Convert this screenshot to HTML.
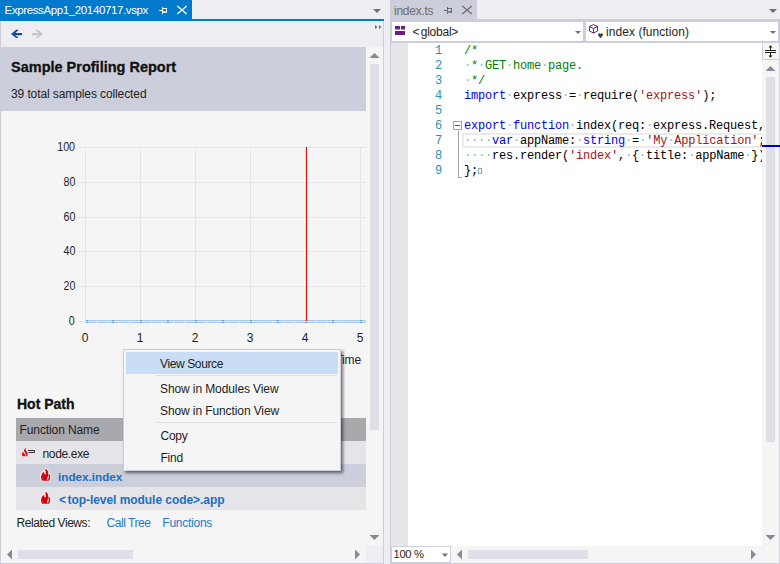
<!DOCTYPE html>
<html><head><meta charset="utf-8">
<style>
*{margin:0;padding:0;box-sizing:border-box}
html,body{width:780px;height:564px;overflow:hidden;background:#eeeef2;font-family:"Liberation Sans",sans-serif;position:relative}
.a{position:absolute}
.t{position:absolute;white-space:pre;line-height:1}
.code{font-family:"Liberation Mono",monospace;font-size:12px;letter-spacing:-0.2px;white-space:pre;position:absolute;line-height:15px;left:464px;color:#000}
.ln{font-family:"Liberation Mono",monospace;font-size:12px;letter-spacing:-0.2px;position:absolute;line-height:15px;left:420px;width:22px;text-align:right;color:#2b91af}
.cm{color:#008000}.kw{color:#0000ff}.st{color:#a31515}.d{color:#7dbdd2}
.gh{position:absolute;left:77px;width:289px;height:1px;background:#e4e5e8}
.gv{position:absolute;top:147px;width:1px;height:175px;background:#e4e5e8}
.yl{position:absolute;right:705px;transform:scaleX(0.89);transform-origin:100% 50%;font-size:12px;line-height:1;color:#1e1e1e;white-space:pre}
.xl{position:absolute;width:20px;text-align:center;font-size:12px;line-height:1;color:#1e1e1e;top:332px}
</style></head><body>
<!-- ================= LEFT PANEL ================= -->
<div class="a" style="left:0;top:0;width:192px;height:19px;background:#007acc"></div>
<div class="t" style="left:4.6px;top:5.1px;font-size:11.5px;letter-spacing:-0.38px;color:#fff">ExpressApp1_20140717.vspx</div>
<svg class="a" style="left:158px;top:6px" width="10" height="9" viewBox="158 6 10 9"><path d="M159 10H162V11H159ZM162 7H163V14H162ZM163 8H167V9H163ZM166 9H167V13H166ZM163 11.3H166V12.7H163Z" fill="#fff"/></svg>
<svg class="a" style="left:176px;top:5px" width="12" height="10" viewBox="176 5 12 10"><path d="M177.3 6L186.7 14M186.7 6L177.3 14" stroke="#fff" stroke-width="1.25" fill="none"/></svg>
<svg class="a" style="left:372px;top:8px" width="10" height="6" viewBox="372 8 10 6"><path d="M373 9H381L377 13Z" fill="#717171"/></svg>
<div class="a" style="left:0;top:19px;width:384px;height:2px;background:#007acc"></div>
<div class="a" style="left:0;top:21px;width:1px;height:543px;background:#cccedb"></div>
<div class="a" style="left:383px;top:21px;width:1px;height:543px;background:#cccedb"></div>
<div class="a" style="left:0;top:563px;width:384px;height:1px;background:#cccedb"></div>
<!-- toolbar -->
<svg class="a" style="left:10px;top:29px" width="14" height="10" viewBox="10 29 14 10"><path d="M11 34L16.2 29.8H18.8L15.3 33H22V35.2H15.3L18.8 38H16.2Z" fill="#0e4e9e"/></svg>
<svg class="a" style="left:31px;top:29px" width="14" height="10" viewBox="31 29 14 10"><path d="M43 34L37.8 29.8H35.2L38.7 33H32V35.2H38.7L35.2 38H37.8Z" fill="#c6c6c9"/></svg>
<svg class="a" style="left:374px;top:24px" width="8" height="6" viewBox="374 24 8 6"><path d="M375 25V29L377.5 27ZM379 25V29L381.5 27Z" fill="#717171"/></svg>
<!-- header -->
<div class="a" style="left:1px;top:47px;width:365px;height:64px;background:#cccedb"></div>
<div class="t" style="left:11px;top:59.7px;font-size:14.5px;font-weight:bold;color:#111;-webkit-text-stroke:0.3px #111">Sample Profiling Report</div>
<div class="t" style="left:11px;top:87.5px;font-size:12px;letter-spacing:-0.1px;color:#1e1e1e">39 total samples collected</div>
<!-- report body -->
<div class="a" style="left:1px;top:111px;width:365px;height:435px;background:#f5f5f5"></div>
<!-- chart -->
<div class="gh" style="top:147px"></div>
<div class="gh" style="top:182px"></div>
<div class="gh" style="top:217px"></div>
<div class="gh" style="top:251px"></div>
<div class="gh" style="top:286px"></div>
<div class="gh" style="top:321px"></div>
<div class="gv" style="left:85px"></div>
<div class="gv" style="left:140px"></div>
<div class="gv" style="left:195px"></div>
<div class="gv" style="left:250px"></div>
<div class="gv" style="left:305px"></div>
<div class="gv" style="left:360px"></div>
<div class="yl" style="top:140.8px">100</div>
<div class="yl" style="top:175.8px">80</div>
<div class="yl" style="top:210.8px">60</div>
<div class="yl" style="top:244.8px">40</div>
<div class="yl" style="top:279.8px">20</div>
<div class="yl" style="top:314.8px">0</div>
<div class="xl" style="left:75px">0</div>
<div class="xl" style="left:130px">1</div>
<div class="xl" style="left:185px">2</div>
<div class="xl" style="left:240px">3</div>
<div class="xl" style="left:295px">4</div>
<div class="xl" style="left:350px">5</div>
<div class="t" style="left:335px;top:354px;font-size:12px;color:#1e1e1e">Time</div>
<div class="a" style="left:86px;top:320px;width:280px;height:1px;background:#a9c9f0"></div>
<div class="a" style="left:86px;top:322px;width:280px;height:1px;background:repeating-linear-gradient(to right,#a9c9f0 0 10px,transparent 10px 11px)"></div>
<div class="a" style="left:86.0px;top:320px;width:2px;height:3px;background:linear-gradient(#5b98e6 0 1px,transparent 1px 2px,#5b98e6 2px)"></div><div class="a" style="left:112.0px;top:320px;width:2px;height:3px;background:linear-gradient(#5b98e6 0 1px,transparent 1px 2px,#5b98e6 2px)"></div><div class="a" style="left:139.5px;top:320px;width:2px;height:3px;background:linear-gradient(#5b98e6 0 1px,transparent 1px 2px,#5b98e6 2px)"></div><div class="a" style="left:167.0px;top:320px;width:2px;height:3px;background:linear-gradient(#5b98e6 0 1px,transparent 1px 2px,#5b98e6 2px)"></div><div class="a" style="left:194.5px;top:320px;width:2px;height:3px;background:linear-gradient(#5b98e6 0 1px,transparent 1px 2px,#5b98e6 2px)"></div><div class="a" style="left:222.0px;top:320px;width:2px;height:3px;background:linear-gradient(#5b98e6 0 1px,transparent 1px 2px,#5b98e6 2px)"></div><div class="a" style="left:249.5px;top:320px;width:2px;height:3px;background:linear-gradient(#5b98e6 0 1px,transparent 1px 2px,#5b98e6 2px)"></div><div class="a" style="left:277.0px;top:320px;width:2px;height:3px;background:linear-gradient(#5b98e6 0 1px,transparent 1px 2px,#5b98e6 2px)"></div><div class="a" style="left:304.5px;top:320px;width:2px;height:3px;background:linear-gradient(#5b98e6 0 1px,transparent 1px 2px,#5b98e6 2px)"></div><div class="a" style="left:332.0px;top:320px;width:2px;height:3px;background:linear-gradient(#5b98e6 0 1px,transparent 1px 2px,#5b98e6 2px)"></div><div class="a" style="left:359.5px;top:320px;width:2px;height:3px;background:linear-gradient(#5b98e6 0 1px,transparent 1px 2px,#5b98e6 2px)"></div>
<div class="a" style="left:306px;top:147px;width:1px;height:174px;background:#ff0000"></div>
<!-- hot path -->
<div class="t" style="left:17px;top:397px;font-size:14px;font-weight:bold;color:#111;-webkit-text-stroke:0.3px #111">Hot Path</div>
<div class="a" style="left:16px;top:418px;width:350px;height:23px;background:#a9a9ad"></div>
<div class="t" style="left:19.5px;top:423.6px;font-size:12px;letter-spacing:-0.1px;color:#1e1e1e">Function Name</div>
<div class="a" style="left:16px;top:441px;width:350px;height:23px;background:#e5e5e9"></div>
<div class="a" style="left:16px;top:464px;width:350px;height:23px;background:#cccedb"></div>
<div class="a" style="left:16px;top:487px;width:350px;height:23px;background:#e5e5e9"></div>
<svg class="a" style="left:38px;top:466px" width="15" height="17" viewBox="38 466 15 17"><path d="M41.2 479C40.6 476.5 41.5 473.5 43.6 471.4C43.8 472.8 44.2 473.6 44.8 474C44.4 471.8 44.9 470 46 468.8C47.8 470.2 48.8 472.5 48.4 475.4C49 475 49.4 474.5 49.6 474C50.6 476 50.6 478.8 49.2 480.8H42.4C41.8 480.4 41.4 479.8 41.2 479Z" fill="#d8000c" stroke="#fff" stroke-width="1.6" paint-order="stroke"/><path d="M45.3 470.6C44.8 471.9 45 473.2 45.5 474.3M48.7 476C48 477.1 47.6 478.4 47.8 479.8" stroke="#fff" stroke-width="1.1" fill="none"/><path d="M42.3 478.3L42.9 479" stroke="#fff" stroke-width="0.6"/></svg>
<svg class="a" style="left:38px;top:489px" width="15" height="17" viewBox="38 466 15 17"><path d="M41.2 479C40.6 476.5 41.5 473.5 43.6 471.4C43.8 472.8 44.2 473.6 44.8 474C44.4 471.8 44.9 470 46 468.8C47.8 470.2 48.8 472.5 48.4 475.4C49 475 49.4 474.5 49.6 474C50.6 476 50.6 478.8 49.2 480.8H42.4C41.8 480.4 41.4 479.8 41.2 479Z" fill="#d8000c" stroke="#fff" stroke-width="1.6" paint-order="stroke"/><path d="M45.3 470.6C44.8 471.9 45 473.2 45.5 474.3M48.7 476C48 477.1 47.6 478.4 47.8 479.8" stroke="#fff" stroke-width="1.1" fill="none"/><path d="M42.3 478.3L42.9 479" stroke="#fff" stroke-width="0.6"/></svg>
<svg class="a" style="left:20px;top:446px" width="17" height="12" viewBox="20 446 17 12"><path d="M23 456.2C21.7 455.1 21.7 453 23 451.4C23.2 452.3 23.5 452.8 24 453C23.8 451 24.3 449.3 25.5 447.6C25.5 449.5 26 451 27 452C28.1 453.5 28.1 455.1 27 456.2Z" fill="#e0000d" stroke="#fff" stroke-width="0.6" paint-order="stroke"/><path d="M24 451.6L25.9 455.6" stroke="#fff" stroke-width="1" fill="none"/><path d="M28 450.5H34.5V452.5H28.5" stroke="#2d2d2d" stroke-width="1" fill="none"/></svg>
<div class="t" style="left:42.5px;top:448.3px;font-size:12px;letter-spacing:-0.34px;color:#1e1e1e">node.exe</div>
<div class="t" style="left:58px;top:471px;font-size:11.7px;font-weight:bold;color:#1c6fc1">index.index</div>
<div class="t" style="left:59px;top:493.6px;font-size:12px;font-weight:bold;letter-spacing:-0.05px;color:#1c6fc1"><span style="margin-right:1.5px">&lt;</span>top-level module code&gt;.app</div>
<div class="t" style="left:16.5px;top:516.6px;font-size:12px;letter-spacing:-0.45px;color:#1e1e1e">Related Views:</div>
<div class="t" style="left:106.5px;top:516.6px;font-size:12px;letter-spacing:-0.44px;color:#1e7ac8">Call Tree</div>
<div class="t" style="left:162.3px;top:516.6px;font-size:12px;letter-spacing:-0.25px;color:#1e7ac8">Functions</div>
<!-- v scrollbar -->
<div class="a" style="left:366px;top:47px;width:17px;height:499px;background:#f5f5f5"></div>
<svg class="a" style="left:369px;top:52px" width="11" height="7" viewBox="0 0 11 7"><path d="M0.5 6H10.5L5.5 1Z" fill="#868999"/></svg>
<div class="a" style="left:370px;top:64px;width:9px;height:366px;background:#dedfe7"></div>
<svg class="a" style="left:369px;top:534px" width="11" height="7" viewBox="0 0 11 7"><path d="M0.5 1H10.5L5.5 6Z" fill="#868999"/></svg>
<!-- h scrollbar -->
<div class="a" style="left:1px;top:546px;width:382px;height:17px;background:#f5f5f5"></div>
<svg class="a" style="left:6px;top:549px" width="7" height="11" viewBox="0 0 7 11"><path d="M6 0.5V10.5L1 5.5Z" fill="#868999"/></svg>
<div class="a" style="left:18px;top:550px;width:115px;height:9px;background:#dedfe7"></div>
<div class="a" style="left:366px;top:546px;width:17px;height:17px;background:#eeeef2"></div>
<svg class="a" style="left:354px;top:549px" width="7" height="11" viewBox="0 0 7 11"><path d="M1 0.5V10.5L6 5.5Z" fill="#868999"/></svg>

<!-- context menu -->
<div class="a" style="left:123px;top:349px;width:218px;height:122px;background:#f5f5f5;border:1px solid #cccedb;box-shadow:2px 2px 3px rgba(0,0,0,0.55)"></div>
<div class="a" style="left:126px;top:352px;width:212px;height:22px;background:#c9def5"></div>
<div class="a" style="left:156px;top:375px;width:181px;height:1px;background:#e0e0e0"></div>
<div class="a" style="left:156px;top:422px;width:181px;height:1px;background:#e0e0e0"></div>
<div class="t" style="left:160px;top:357.5px;font-size:12px;letter-spacing:-0.38px;color:#1e1e1e">View Source</div>
<div class="t" style="left:160px;top:382.9px;font-size:12px;letter-spacing:-0.1px;color:#1e1e1e">Show in Modules View</div>
<div class="t" style="left:160px;top:405px;font-size:12px;letter-spacing:-0.1px;color:#1e1e1e">Show in Function View</div>
<div class="t" style="left:160.5px;top:429.8px;font-size:12px;letter-spacing:-0.27px;color:#1e1e1e">Copy</div>
<div class="t" style="left:160.5px;top:452px;font-size:12px;letter-spacing:-0.22px;color:#1e1e1e">Find</div>

<!-- ================= RIGHT PANEL ================= -->
<div class="a" style="left:390px;top:0;width:87px;height:22px;background:#cccedb"></div>
<div class="t" style="left:394px;top:4.8px;font-size:12px;letter-spacing:-0.25px;color:#6d6d6d">index.ts</div>
<svg class="a" style="left:443px;top:6px" width="10" height="9" viewBox="158 6 10 9"><path d="M159 10H162V11H159ZM162 7H163V14H162ZM163 8H167V9H163ZM166 9H167V13H166ZM163 11.3H166V12.7H163Z" fill="#6d6d6d"/></svg>
<svg class="a" style="left:461px;top:5px" width="12" height="10" viewBox="176 5 12 10"><path d="M177.3 6L186.7 14M186.7 6L177.3 14" stroke="#6d6d6d" stroke-width="1.25" fill="none"/></svg>
<svg class="a" style="left:768px;top:8px" width="10" height="6" viewBox="372 8 10 6"><path d="M373 9H381L377 13Z" fill="#717171"/></svg>
<div class="a" style="left:390px;top:19px;width:390px;height:545px;background:#cccedb"></div>
<div class="a" style="left:392px;top:22px;width:191px;height:19px;background:#fff"></div>
<div class="a" style="left:586px;top:22px;width:192px;height:19px;background:#fff"></div>
<svg class="a" style="left:395px;top:26px" width="11" height="9" viewBox="0 0 11 9"><path d="M0 0H5V3.5H0ZM6 0H10V3.5H6ZM0 5H10V9H0Z" fill="#68217a"/></svg>
<div class="t" style="left:412.5px;top:25.7px;font-size:12px;letter-spacing:-0.25px;color:#1e1e1e"><span style="margin-right:1.5px">&lt;</span>global&gt;</div>
<svg class="a" style="left:574px;top:30px" width="8" height="5" viewBox="574 30 8 5"><path d="M575 31H581L578 34Z" fill="#717171"/></svg>
<svg class="a" style="left:588px;top:23px" width="16" height="16" viewBox="0 0 16 16"><path d="M5.5 1.5L9.5 3.5V8L5.5 10L1.5 8V3.5ZM1.5 3.5L5.5 5.5L9.5 3.5M5.5 5.5V10" stroke="#68217a" stroke-width="1" fill="none"/><path d="M10 11.2Q11.2 9.4 12.5 11Q13.8 9.4 15 11.2Q15.3 12.8 12.5 15.2Q9.7 12.8 10 11.2Z" fill="#424242"/></svg>
<div class="t" style="left:606px;top:25.8px;font-size:12px;letter-spacing:0.06px;color:#1e1e1e">index (function)</div>
<svg class="a" style="left:769px;top:30px" width="8" height="5" viewBox="574 30 8 5"><path d="M575 31H581L578 34Z" fill="#717171"/></svg>
<!-- editor -->
<div class="a" style="left:391px;top:43px;width:17px;height:503px;background:#e6e7e8"></div>
<div class="a" style="left:408px;top:43px;width:354px;height:503px;background:#fff"></div>
<div class="a" style="left:762px;top:43px;width:17px;height:503px;background:#f5f5f5"></div>
<div class="a" style="left:391px;top:546px;width:388px;height:17px;background:#f5f5f5"></div>
<!-- current line box -->
<div class="a" style="left:462px;top:133px;width:300px;height:15px;border:2px solid #ebebeb;border-right:none"></div>
<div class="ln" style="top:44px">1<br>2<br>3<br>4<br>5<br>6<br>7<br>8<br>9</div>
<div class="code" style="top:44px;overflow:hidden;width:298px"><span class="cm">/*</span>
<span class="cm"><span class="d">·</span>*<span class="d">·</span>GET<span class="d">·</span>home<span class="d">·</span>page.</span>
<span class="cm"><span class="d">·</span>*/</span>
<span class="kw">import</span><span class="d">·</span>express<span class="d">·</span>=<span class="d">·</span>require(<span class="st">'express'</span>);

<span class="kw">export</span><span class="d">·</span><span class="kw">function</span><span class="d">·</span>index(req:<span class="d">·</span>express.Request,
<span class="d">····</span><span class="kw">var</span><span class="d">·</span>appName:<span class="d">·</span><span class="kw">string</span><span class="d">·</span>=<span class="d">·</span><span class="st">'My<span class="d">·</span>Application'</span>;
<span class="d">····</span>res.render(<span class="st">'index'</span>,<span class="d">·</span>{<span class="d">·</span>title:<span class="d">·</span>appName<span class="d">·</span>});
};</div>
<!-- outline -->
<div class="a" style="left:453px;top:121px;width:9px;height:9px;border:1px solid #a5a5a5;background:#fff"></div>
<div class="a" style="left:455px;top:125px;width:5px;height:1px;background:#555"></div>
<div class="a" style="left:458px;top:131px;width:1px;height:46px;background:#a5a5a5"></div>
<div class="a" style="left:458px;top:177px;width:4px;height:1px;background:#a5a5a5"></div>
<div class="a" style="left:478px;top:168px;width:4px;height:6px;border:1px solid #6fb3cc"></div>
<!-- editor v scrollbar -->
<div class="a" style="left:762px;top:43px;width:17px;height:17px;border-left:1px solid #cccedb;border-bottom:1px solid #cccedb"></div><svg class="a" style="left:763px;top:43px" width="16" height="16" viewBox="763 43 16 16"><path d="M765 50.5H776M765 52.5H776M770.5 47V50.5M770.5 52.5V56" stroke="#1e1e1e" stroke-width="1" fill="none"/><path d="M768.5 47.5L770.5 45.3L772.5 47.5ZM768.5 55.5L770.5 57.7L772.5 55.5Z" fill="#1e1e1e"/></svg>
<svg class="a" style="left:765px;top:65px" width="11" height="7" viewBox="0 0 11 7"><path d="M0.5 6H10.5L5.5 1Z" fill="#868999"/></svg>
<div class="a" style="left:766px;top:77px;width:9px;height:365px;background:#dedfe7"></div>
<div class="a" style="left:762px;top:145px;width:18px;height:2px;background:#0000c0"></div>
<svg class="a" style="left:765px;top:534px" width="11" height="7" viewBox="0 0 11 7"><path d="M0.5 1H10.5L5.5 6Z" fill="#868999"/></svg>
<!-- editor bottom -->
<div class="a" style="left:391px;top:546px;width:60px;height:17px;background:#fff;border:1px solid #cccedb"></div>
<div class="t" style="left:393.5px;top:549px;font-size:11.2px;letter-spacing:-0.3px;color:#1e1e1e">100 %</div>
<svg class="a" style="left:441px;top:553px" width="8" height="5" viewBox="0 0 8 5"><path d="M1 0.5H7L4 4Z" fill="#717171"/></svg>
<svg class="a" style="left:456px;top:549px" width="7" height="11" viewBox="0 0 7 11"><path d="M6 0.5V10.5L1 5.5Z" fill="#868999"/></svg>
<div class="a" style="left:468px;top:550px;width:120px;height:9px;background:#dedfe7"></div>
<svg class="a" style="left:750px;top:549px" width="7" height="11" viewBox="0 0 7 11"><path d="M1 0.5V10.5L6 5.5Z" fill="#868999"/></svg>
</body></html>
